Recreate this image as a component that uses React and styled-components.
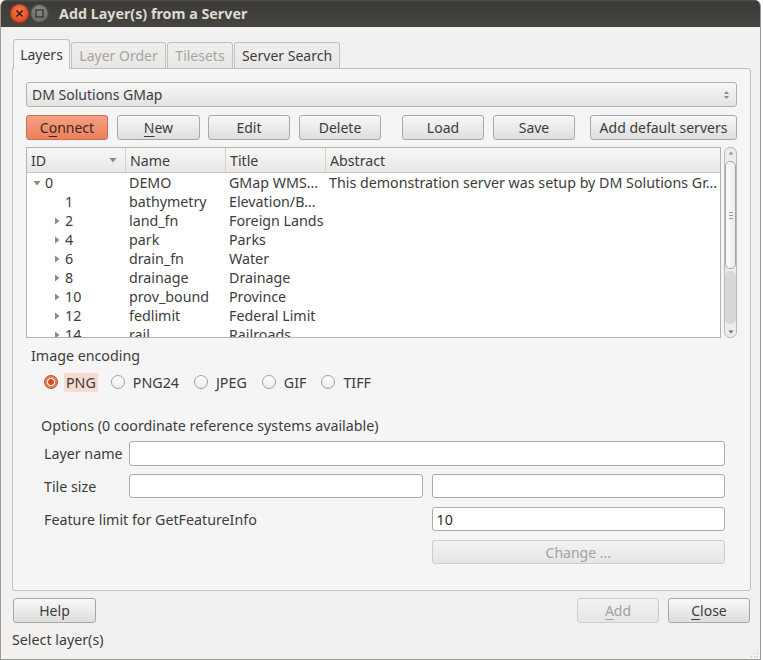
import React from "react";
import styled, { createGlobalStyle, css } from "styled-components";

const Global = createGlobalStyle`
  html, body { margin: 0; padding: 0; background: #ffffff; }
  body { font-family: "Noto Sans", "Open Sans", sans-serif; font-size: 13px; color: #3c3c3c; }
  * { box-sizing: border-box; }
`;

const Window = styled.div`
  width: 761px;
  height: 660px;
  display: flex;
  flex-direction: column;
  background: #f2f1f0;
  border: 1px solid #9d9b97;
  border-top: none;
  border-radius: 6px 6px 0 0;
  overflow: hidden;
  position: relative;
`;

const TitleBar = styled.div`
  height: 27px;
  flex: none;
  display: flex;
  align-items: center;
  gap: 1px;
  padding-left: 9px;
  background: linear-gradient(to bottom, #55534e 0px, #3c3b37 2px, #46443f 100%);
`;

const WinButton = styled.div`
  width: 19px;
  height: 19px;
  border-radius: 50%;
  display: flex;
  align-items: center;
  justify-content: center;
  ${(p) =>
    p.$close
      ? css`
          background: radial-gradient(circle at 50% 35%, #f37a4c 0%, #e4522a 60%, #c74221 100%);
          box-shadow: inset 0 0 0 1px #9e3b1f;
        `
      : css`
          background: radial-gradient(circle at 50% 35%, #8d8b85 0%, #6f6d68 65%, #5f5d58 100%);
          box-shadow: inset 0 0 0 1px #3f3e3a;
        `}
`;

const Title = styled.div`
  margin-left: 9px;
  font-weight: bold;
  font-size: 14.3px;
  color: #dfdbd2;
`;

const Content = styled.div`
  flex: 1;
  display: flex;
  flex-direction: column;
  padding: 0 9px 0 11px;
`;

const TabBar = styled.div`
  display: flex;
  align-items: flex-end;
  margin: 12px 0 0 1px;
  height: 29px;
`;

const Tab = styled.div`
  height: 26px;
  width: ${(p) => p.$w}px;
  margin-right: 1px;
  display: flex;
  align-items: center;
  justify-content: center;
  border: 1px solid #c3c0bb;
  border-bottom: none;
  border-radius: 3px 3px 0 0;
  font-size: 14px;
  color: ${(p) => (p.$disabled ? "#a6a4a0" : "#3c3c3c")};
  background: ${(p) =>
    p.$active ? "#f5f5f5" : "linear-gradient(to bottom, #f0efee, #e8e7e6)"};
  position: relative;
  z-index: ${(p) => (p.$active ? 2 : 1)};
  ${(p) => p.$active && css`margin-bottom: -1px; height: 30px;`}
`;

const Panel = styled.div`
  height: 523px;
  display: flex;
  flex-direction: column;
  background: #f5f5f5;
  border: 1px solid #c3c0bb;
  border-radius: 0 3px 3px 3px;
  padding: 13px 13px 0 13px;
`;

const Combo = styled.div`
  height: 25px;
  display: flex;
  align-items: center;
  justify-content: space-between;
  padding: 0 6px 0 5px;
  border: 1px solid #b4b1ac;
  border-radius: 3px;
  background: linear-gradient(to bottom, #f7f7f7, #e3e3e3);
  font-size: 14px;
`;

const ButtonRow = styled.div`
  display: flex;
  margin-top: 8px;
  height: 25px;
`;

const Button = styled.div`
  width: ${(p) => p.$w || 82}px;
  height: ${(p) => p.$h || 25}px;
  margin-left: ${(p) => p.$ml || 0}px;
  flex: none;
  display: flex;
  align-items: center;
  justify-content: center;
  border-radius: 3px;
  font-size: 14px;
  white-space: nowrap;
  ${(p) =>
    p.$primary
      ? css`
          border: 1px solid #c9704f;
          background: linear-gradient(to bottom, #f4a283, #ed7f5b);
          color: #3a2a24;
        `
      : p.$disabled
      ? css`
          border: 1px solid #cfcdca;
          background: linear-gradient(to bottom, #f2f2f2, #e6e6e6);
          color: #a4a2a0;
        `
      : css`
          border: 1px solid #a9a7a3;
          background: linear-gradient(to bottom, #f8f8f8, #dedede);
          color: #3c3c3c;
        `}
  u {
    text-decoration: underline;
    text-underline-offset: 3px;
  }
`;

const TreeRow = styled.div`
  display: flex;
  margin-top: 7px;
  height: 191px;
  gap: 3px;
`;

const Tree = styled.div`
  flex: 1;
  display: flex;
  flex-direction: column;
  background: #ffffff;
  border: 1px solid #b5b2ad;
  overflow: hidden;
`;

const cols = "99px 100px 100px 1fr";

const Header = styled.div`
  display: grid;
  grid-template-columns: ${cols};
  height: 25px;
  flex: none;
  background: linear-gradient(to bottom, #f7f7f6, #e9e8e7);
  border-bottom: 1px solid #c8c6c2;
`;

const HeadCell = styled.div`
  display: flex;
  align-items: center;
  justify-content: space-between;
  padding: 0 8px 0 4px;
  font-size: 14.2px;
  border-right: 1px solid #d3d1cd;
  &:last-child { border-right: none; }
`;

const Body = styled.div`
  display: flex;
  flex-direction: column;
`;

const Row = styled.div`
  display: grid;
  grid-template-columns: ${cols};
  height: 19px;
  flex: none;
  align-items: center;
  font-size: 14.25px;
  color: #3c3c3c;
`;

const Cell = styled.div`
  padding-left: ${(p) => p.$pl ?? 3}px;
  white-space: nowrap;
  overflow: hidden;
  display: flex;
  align-items: center;
`;

const Arrow = styled.span`
  width: 14px;
  display: inline-flex;
  justify-content: center;
  margin-right: 1px;
`;

const ScrollBar = styled.div`
  width: 13px;
  flex: none;
  display: flex;
  flex-direction: column;
  align-items: center;
  border: 1px solid #bdbab6;
  border-radius: 6px;
  background: #ececeb;
  padding: 3px 0;
`;

const ScrollThumb = styled.div`
  width: 11px;
  height: 108px;
  margin-top: 6px;
  border: 1px solid #a9a6a2;
  border-radius: 5px;
  background: linear-gradient(to right, #fbfbfb, #ececec);
  display: flex;
  flex-direction: column;
  align-items: center;
  justify-content: center;
  gap: 2px;
`;

const Grip = styled.div`
  width: 4px;
  height: 1px;
  background: #9f9c98;
`;

const ScrollRest = styled.div`
  flex: 1;
  width: 11px;
  margin: 2px 0 6px;
  border-radius: 5px;
  background: #d9d8d6;
`;

const SectionLabel = styled.div`
  font-size: 14.25px;
  margin: ${(p) => p.$m};
`;

const RadioRow = styled.div`
  display: flex;
  align-items: center;
  margin: 7px 0 0 18px;
  height: 20px;
`;

const RadioItem = styled.div`
  display: flex;
  align-items: center;
  margin-right: ${(p) => p.$mr}px;
`;

const RadioCircle = styled.span`
  width: 14px;
  height: 14px;
  border-radius: 50%;
  flex: none;
  ${(p) =>
    p.$on
      ? css`
          background: radial-gradient(circle, #c94f25 0 2.6px, #fbe6dc 3.2px 3.8px, #ec7e55 4.4px);
          border: 1px solid #b5502e;
        `
      : css`
          background: linear-gradient(to bottom, #ffffff, #ececec);
          border: 1px solid #a3a09c;
        `}
`;

const RadioText = styled.span`
  font-size: 14.25px;
  margin-left: 6px;
  padding: 0 2px;
  height: 19px;
  display: flex;
  align-items: center;
  background: ${(p) => (p.$focus ? "#f7dbd0" : "transparent")};
`;

const Options = styled.div`
  margin: 24px 12px 0 2px;
  display: flex;
  flex-direction: column;
`;

const Form = styled.div`
  display: grid;
  grid-template-columns: 76px 1fr 1fr;
  column-gap: 9px;
  row-gap: 8px;
  margin: 6px 0 0 16px;
  grid-auto-rows: 25px;
`;

const FieldLabel = styled.div`
  display: flex;
  align-items: center;
  font-size: 14.25px;
  white-space: nowrap;
  grid-column: ${(p) => p.$span || "auto"};
`;

const Input = styled.div`
  grid-column: ${(p) => p.$col || "auto"};
  display: flex;
  align-items: center;
  padding-left: 4px;
  height: ${(p) => p.$h || 25}px;
  background: #ffffff;
  border: 1px solid #aeaaa5;
  border-radius: 3px;
  font-size: 14.25px;
  color: #2e2e2e;
`;

const ChangeButton = styled(Button)`
  grid-column: 3;
  width: auto;
`;

const Footer = styled.div`
  display: flex;
  align-items: center;
  margin-top: 7px;
  padding: 0 1px;
`;

const Spacer = styled.div`
  flex: 1;
`;

const Status = styled.div`
  font-size: 14.25px;
  margin-top: 7px;
`;

const ResizeGrip = styled.svg`
  position: absolute;
  right: 1px;
  bottom: 1px;
`;

const Tri = ({ dir }) => (
  <svg width="8" height="8" viewBox="0 0 8 8">
    {dir === "down" ? (
      <polygon points="0.5,2 7.5,2 4,6.5" fill="#8b8985" />
    ) : (
      <polygon points="2,0.5 6.5,4 2,7.5" fill="#8b8985" />
    )}
  </svg>
);

const rows = [
  { id: "0", name: "DEMO", title: "GMap WMS…", abs: "This demonstration server was setup by DM Solutions Gr…", lvl: 0, arrow: "down" },
  { id: "1", name: "bathymetry", title: "Elevation/B…", lvl: 1 },
  { id: "2", name: "land_fn", title: "Foreign Lands", lvl: 1, arrow: "right" },
  { id: "4", name: "park", title: "Parks", lvl: 1, arrow: "right" },
  { id: "6", name: "drain_fn", title: "Water", lvl: 1, arrow: "right" },
  { id: "8", name: "drainage", title: "Drainage", lvl: 1, arrow: "right" },
  { id: "10", name: "prov_bound", title: "Province", lvl: 1, arrow: "right" },
  { id: "12", name: "fedlimit", title: "Federal Limit", lvl: 1, arrow: "right" },
  { id: "14", name: "rail", title: "Railroads", lvl: 1, arrow: "right" },
];

const formats = [
  { label: "PNG", on: true },
  { label: "PNG24" },
  { label: "JPEG" },
  { label: "GIF" },
  { label: "TIFF" },
];

export default function App() {
  return (
    <>
      <Global />
      <Window>
        <TitleBar>
          <WinButton $close>
            <svg width="9" height="9" viewBox="0 0 9 9">
              <path d="M1.5 1.5 L7.5 7.5 M7.5 1.5 L1.5 7.5" stroke="#3a1a10" strokeWidth="1.6" />
            </svg>
          </WinButton>
          <WinButton>
            <svg width="9" height="9" viewBox="0 0 9 9">
              <rect x="1" y="1" width="7" height="7" fill="none" stroke="#3a3935" strokeWidth="1.4" />
            </svg>
          </WinButton>
          <Title>Add Layer(s) from a Server</Title>
        </TitleBar>
        <Content>
          <TabBar>
            <Tab $active $w={57}>Layers</Tab>
            <Tab $disabled $w={95}>Layer Order</Tab>
            <Tab $disabled $w={66}>Tilesets</Tab>
            <Tab $w={106}>Server Search</Tab>
          </TabBar>
          <Panel>
            <Combo>
              <span>DM Solutions GMap</span>
              <svg width="7" height="12" viewBox="0 0 7 12">
                <polygon points="3.5,2 6,5 1,5" fill="#8d8b87" />
                <polygon points="1,7 6,7 3.5,10" fill="#8d8b87" />
              </svg>
            </Combo>
            <ButtonRow>
              <Button $primary>C<u>o</u>nnect</Button>
              <Button $ml={9} $w={83}><u>N</u>ew</Button>
              <Button $ml={8}>Edit</Button>
              <Button $ml={9}>Delete</Button>
              <Button $ml={21}>Load</Button>
              <Button $ml={9}>Save</Button>
              <Button $ml={15} $w={147}>Add default servers</Button>
            </ButtonRow>
            <TreeRow>
              <Tree>
                <Header>
                  <HeadCell>
                    <span>ID</span>
                    <Tri dir="down" />
                  </HeadCell>
                  <HeadCell>Name</HeadCell>
                  <HeadCell>Title</HeadCell>
                  <HeadCell>Abstract</HeadCell>
                </Header>
                <Body>
                  {rows.map((r) => (
                    <Row key={r.id}>
                      <Cell $pl={r.lvl ? 23 : 3}>
                        <Arrow>{r.arrow ? <Tri dir={r.arrow} /> : null}</Arrow>
                        {r.id}
                      </Cell>
                      <Cell>{r.name}</Cell>
                      <Cell>{r.title}</Cell>
                      <Cell>{r.abs || ""}</Cell>
                    </Row>
                  ))}
                </Body>
              </Tree>
              <ScrollBar>
                <svg width="6" height="4" viewBox="0 0 6 4">
                  <polygon points="3,0.5 5.5,3.5 0.5,3.5" fill="#9a9894" />
                </svg>
                <ScrollThumb>
                  <Grip />
                  <Grip />
                  <Grip />
                </ScrollThumb>
                <ScrollRest />
                <svg width="6" height="4" viewBox="0 0 6 4">
                  <polygon points="0.5,0.5 5.5,0.5 3,3.5" fill="#6e6c68" />
                </svg>
              </ScrollBar>
            </TreeRow>
            <SectionLabel $m="8px 0 0 5px">Image encoding</SectionLabel>
            <RadioRow>
              {formats.map((f) => (
                <RadioItem key={f.label} $mr={13}>
                  <RadioCircle $on={f.on} />
                  <RadioText $focus={f.on}>{f.label}</RadioText>
                </RadioItem>
              ))}
            </RadioRow>
            <Options>
              <SectionLabel $m="0 0 0 13px">Options (0 coordinate reference systems available)</SectionLabel>
              <Form>
                <FieldLabel>Layer name</FieldLabel>
                <Input $col="2 / 4" />
                <FieldLabel>Tile size</FieldLabel>
                <Input $h={24} />
                <Input $h={24} />
                <FieldLabel $span="1 / 3">Feature limit for GetFeatureInfo</FieldLabel>
                <Input $h={24}>10</Input>
                <ChangeButton $disabled $h={24}>Change ...</ChangeButton>
              </Form>
            </Options>
          </Panel>
          <Footer>
            <Button $w={83}>Help</Button>
            <Spacer />
            <Button $disabled><u>A</u>dd</Button>
            <Button $ml={9}><u>C</u>lose</Button>
          </Footer>
          <Status>Select layer(s)</Status>
        </Content>
        <ResizeGrip width="10" height="10" viewBox="0 0 10 10">
          {[[8, 2], [8, 5], [5, 5], [8, 8], [5, 8], [2, 8]].map(([x, y]) => (
            <rect key={`${x}-${y}`} x={x} y={y} width="1" height="1" fill="#c4c2be" />
          ))}
        </ResizeGrip>
      </Window>
    </>
  );
}
